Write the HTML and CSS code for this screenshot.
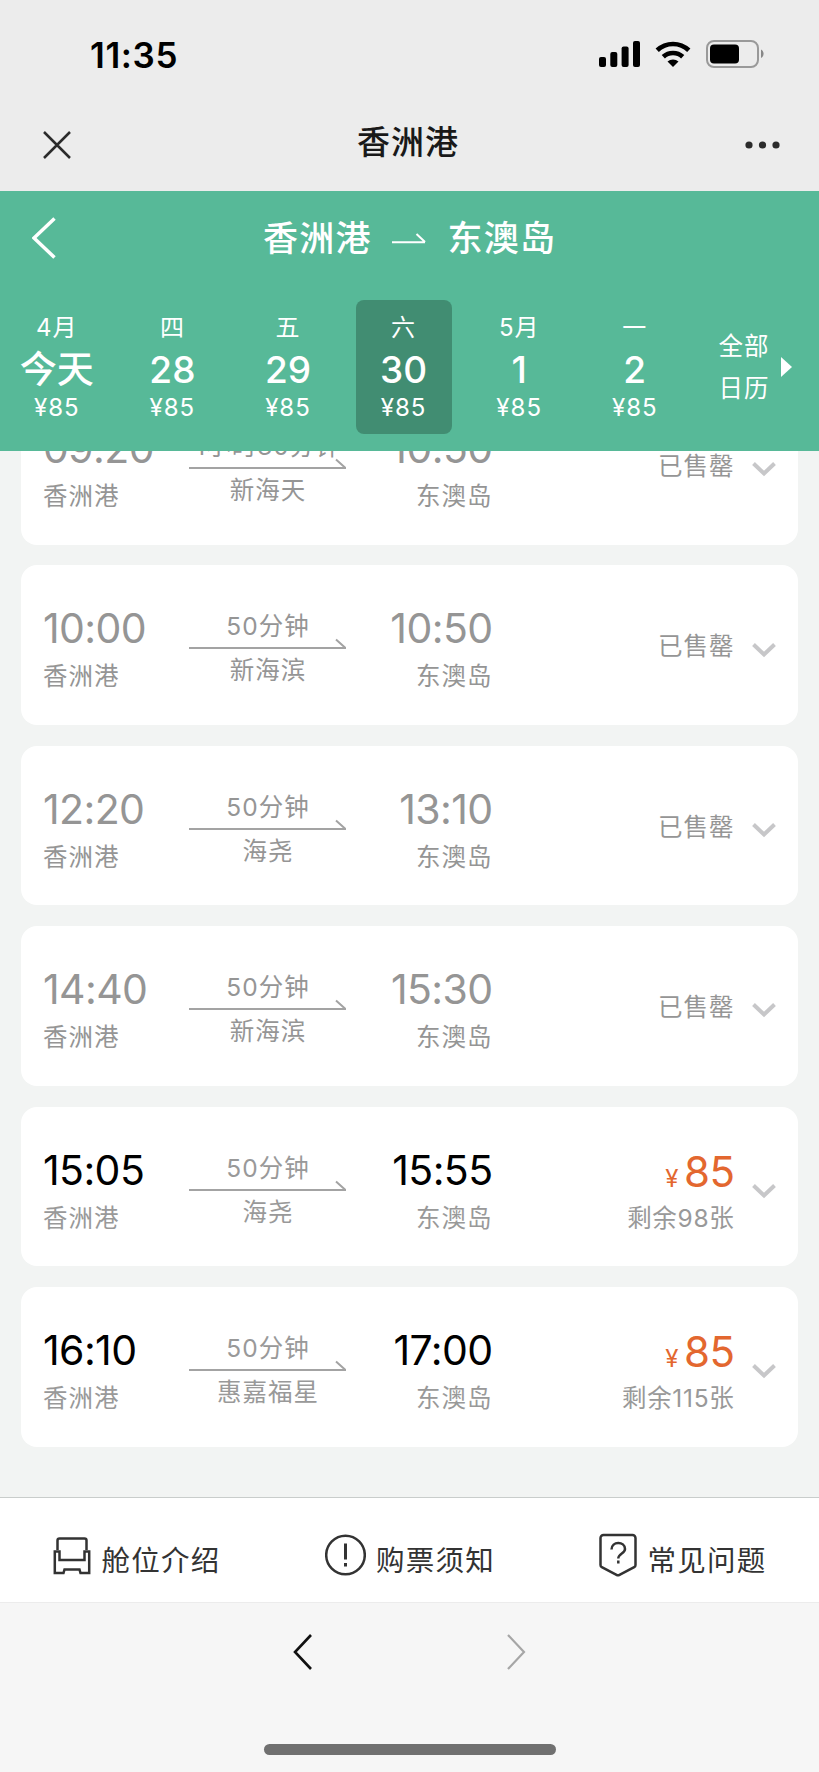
FILE: index.html
```
<!DOCTYPE html>
<html lang="zh-CN">
<head>
    <meta charset="UTF-8">
    <meta name="viewport" content="width=device-width, initial-scale=1.0">
    <title>香洲港</title>
    <link rel="stylesheet" href="styles.css">
</head>
<body>
    <svg class="symbols" aria-hidden="true">
        <symbol id="arrow" viewBox="0 0 158 12">
            <path d="M0 10h157M147 1.500l9.500 8.500" fill="none" stroke="currentColor" stroke-width="2"/>
        </symbol>
        <symbol id="down" viewBox="0 0 24 16">
            <path d="M1.500 2.500l10.500 10 10.500-10" fill="none" stroke="currentColor" stroke-width="4"/>
        </symbol>
    </svg>

    <div class="status-bar">
        <span class="clock">11:35</span>
        <div class="status-icons">
            <svg class="signal" width="41" height="26" viewBox="0 0 41 26">
                <rect x="0" y="16" width="7" height="10" rx="2"/>
                <rect x="11.300" y="11" width="7" height="15" rx="2"/>
                <rect x="22.600" y="5.500" width="7" height="20.500" rx="2"/>
                <rect x="34" y="0" width="7" height="26" rx="2"/>
            </svg>
            <svg class="wifi" width="36" height="26" viewBox="0 0 36 26">
                <path d="M2.200 9.300a23 23 0 0 1 31.600 0M8.300 15.800a14.300 14.300 0 0 1 19.400 0" fill="none" stroke="#000" stroke-width="4.700"/>
                <path d="M12.500 20.500a8.500 8.500 0 0 1 11 0L18 26z"/>
            </svg>
            <svg class="battery" width="59" height="28" viewBox="0 0 59 28">
                <rect x="1" y="1" width="51" height="26" rx="7" fill="none" stroke="#999" stroke-width="2"/>
                <rect x="4" y="4.500" width="29" height="19" rx="4"/>
                <path d="M55 9.500c3.400 1.500 3.400 7 0 8.500z" fill="#888"/>
            </svg>
        </div>
    </div>

    <div class="title-bar">
        <svg class="close" width="28" height="28" viewBox="0 0 28 28">
            <path d="M1 1l26 26M27 1L1 27" stroke="#2b2b2b" stroke-width="2.500"/>
        </svg>
        <h1>香洲港</h1>
        <svg class="more" width="35" height="8" viewBox="0 0 35 8">
            <circle cx="4" cy="4" r="3.600"/>
            <circle cx="17.500" cy="4" r="3.600"/>
            <circle cx="31" cy="4" r="3.600"/>
        </svg>
    </div>

    <header class="header">
        <div class="route">
            <svg class="back" width="24" height="42" viewBox="0 0 24 42">
                <path d="M22.500 1.500L2 21l20.500 19.500" fill="none" stroke="#fff" stroke-width="3.500"/>
            </svg>
            <span>香洲港</span>
            <svg class="route-arrow" width="34" height="12" viewBox="0 0 34 12">
                <path d="M0 10.200h33M24.500 2l8.500 8" fill="none" stroke="#fff" stroke-width="2"/>
            </svg>
            <span>东澳岛</span>
        </div>
        <div class="dates">
            <div class="date">
                <span class="week">4月</span>
                <span class="day today">今天</span>
                <span class="fare">¥85</span>
            </div>
            <div class="date">
                <span class="week">四</span>
                <span class="day">28</span>
                <span class="fare">¥85</span>
            </div>
            <div class="date">
                <span class="week">五</span>
                <span class="day">29</span>
                <span class="fare">¥85</span>
            </div>
            <div class="date active">
                <span class="week">六</span>
                <span class="day">30</span>
                <span class="fare">¥85</span>
            </div>
            <div class="date">
                <span class="week">5月</span>
                <span class="day">1</span>
                <span class="fare">¥85</span>
            </div>
            <div class="date">
                <span class="week">一</span>
                <span class="day">2</span>
                <span class="fare">¥85</span>
            </div>
            <div class="calendar">
                <span>全部<br>日历</span>
                <i class="triangle"></i>
            </div>
        </div>
    </header>

    <main class="trips">
        <div class="trip sold-out">
            <div class="depart">
                <div class="time">09:20</div>
                <div class="port">香洲港</div>
            </div>
            <div class="middle">
                <div class="duration">1小时30分钟</div>
                <svg class="line"><use href="#arrow"/></svg>
                <div class="ship">新海天</div>
            </div>
            <div class="arrive">
                <div class="time">10:50</div>
                <div class="port">东澳岛</div>
            </div>
            <div class="ticket">已售罄</div>
            <svg class="down"><use href="#down"/></svg>
        </div>

        <div class="trip sold-out">
            <div class="depart">
                <div class="time">10:00</div>
                <div class="port">香洲港</div>
            </div>
            <div class="middle">
                <div class="duration">50分钟</div>
                <svg class="line"><use href="#arrow"/></svg>
                <div class="ship">新海滨</div>
            </div>
            <div class="arrive">
                <div class="time">10:50</div>
                <div class="port">东澳岛</div>
            </div>
            <div class="ticket">已售罄</div>
            <svg class="down"><use href="#down"/></svg>
        </div>

        <div class="trip sold-out">
            <div class="depart">
                <div class="time">12:20</div>
                <div class="port">香洲港</div>
            </div>
            <div class="middle">
                <div class="duration">50分钟</div>
                <svg class="line"><use href="#arrow"/></svg>
                <div class="ship">海尧</div>
            </div>
            <div class="arrive">
                <div class="time">13:10</div>
                <div class="port">东澳岛</div>
            </div>
            <div class="ticket">已售罄</div>
            <svg class="down"><use href="#down"/></svg>
        </div>

        <div class="trip sold-out">
            <div class="depart">
                <div class="time">14:40</div>
                <div class="port">香洲港</div>
            </div>
            <div class="middle">
                <div class="duration">50分钟</div>
                <svg class="line"><use href="#arrow"/></svg>
                <div class="ship">新海滨</div>
            </div>
            <div class="arrive">
                <div class="time">15:30</div>
                <div class="port">东澳岛</div>
            </div>
            <div class="ticket">已售罄</div>
            <svg class="down"><use href="#down"/></svg>
        </div>

        <div class="trip">
            <div class="depart">
                <div class="time">15:05</div>
                <div class="port">香洲港</div>
            </div>
            <div class="middle">
                <div class="duration">50分钟</div>
                <svg class="line"><use href="#arrow"/></svg>
                <div class="ship">海尧</div>
            </div>
            <div class="arrive">
                <div class="time">15:55</div>
                <div class="port">东澳岛</div>
            </div>
            <div class="ticket">
                <div class="price"><small>¥</small>85</div>
                <div class="left">剩余98张</div>
            </div>
            <svg class="down"><use href="#down"/></svg>
        </div>

        <div class="trip">
            <div class="depart">
                <div class="time">16:10</div>
                <div class="port">香洲港</div>
            </div>
            <div class="middle">
                <div class="duration">50分钟</div>
                <svg class="line"><use href="#arrow"/></svg>
                <div class="ship">惠嘉福星</div>
            </div>
            <div class="arrive">
                <div class="time">17:00</div>
                <div class="port">东澳岛</div>
            </div>
            <div class="ticket">
                <div class="price"><small>¥</small>85</div>
                <div class="left">剩余115张</div>
            </div>
            <svg class="down"><use href="#down"/></svg>
        </div>
    </main>

    <div class="actions">
        <div class="action">
            <svg width="38" height="44" viewBox="0 0 38 44">
                <path d="M4.500 17V7.500a2 2 0 0 1 2-2h25a2 2 0 0 1 2 2V17M1.800 18.500h4.700V27h25v-8.500h4.700V40h-8.700l-1-3.500h-15l-1 3.500H1.800z"/>
            </svg>
            <span>舱位介绍</span>
        </div>
        <div class="action">
            <svg width="41" height="44" viewBox="0 0 41 44">
                <circle cx="20.500" cy="22" r="19.300"/>
                <path d="M20.500 10.500v16M20.500 30v3.500" stroke-width="3"/>
            </svg>
            <span>购票须知</span>
        </div>
        <div class="action">
            <svg width="38" height="44" viewBox="0 0 38 44">
                <path d="M4.500 2h29a3 3 0 0 1 3 3v27q0 1.500-1.300 2.200L20.500 41.800q-1.500.800-3 0L2.800 34.200Q1.500 33.500 1.500 32V5a3 3 0 0 1 3-3z"/>
                <path d="M12.500 16.500c0-8.700 13.500-8.700 13.500-.500 0 4.500-6.700 4.500-6.700 9.500M19.300 27.500v3"/>
            </svg>
            <span>常见问题</span>
        </div>
    </div>

    <div class="toolbar">
        <svg width="20" height="36" viewBox="0 0 20 36">
            <path d="M18 1L2 18l16 17" fill="none" stroke="#111" stroke-width="2.600"/>
        </svg>
        <svg width="20" height="36" viewBox="0 0 20 36">
            <path d="M2 1l16 17L2 35" fill="none" stroke="#a6a6a6" stroke-width="2.200"/>
        </svg>
    </div>
    <div class="home-bar"><i></i></div>
</body>
</html>
```
FILE: styles.css
```
* {
    box-sizing: border-box;
}
body {
    margin: 0;
    height: 1772px;
    overflow: hidden;
    display: flex;
    flex-direction: column;
    font-family: Inter, "Noto Sans CJK SC", sans-serif;
    font-size: 24px;
    background: #f2f4f3;
    color: #000;
}
svg {
    display: block;
    flex: none;
}
.symbols {
    display: none;
}

/* phone status bar */
.status-bar {
    height: 108px;
    padding: 0 54px 0 90px;
    display: flex;
    align-items: center;
    justify-content: space-between;
    background: #ececec;
}
.clock {
    font-size: 35px;
    font-weight: 600;
    line-height: 40px;
    letter-spacing: 0.600px;
    margin-top: 1px;
}
.status-icons {
    display: flex;
    align-items: center;
}
.wifi {
    margin: 0 15px;
}

.title-bar {
    height: 83px;
    padding: 0 39px 9px 43px;
    display: flex;
    align-items: center;
    justify-content: space-between;
    background: #ececec;
}
.title-bar h1 {
    margin: 0 0 6px;
    font-size: 33px;
    font-weight: 500;
    letter-spacing: 1px;
    line-height: 44px;
    color: #191919;
}
.more {
    fill: #2b2b2b;
}

/* green header */
.header {
    position: relative;
    z-index: 1;
    height: 260px;
    background: #57b998;
    color: #fff;
}
.route {
    height: 109px;
    padding: 0 0 16px 32px;
    display: flex;
    align-items: center;
    font-size: 35px;
    font-weight: 500;
    letter-spacing: 1.200px;
}
.route span {
    margin-top: -4px;
}
.back {
    margin-right: 207px;
}
.route-arrow {
    margin: 0 22px 0 20px;
}
.dates {
    display: flex;
    margin-left: -1px;
}
.date {
    width: 96px;
    height: 134px;
    margin: 0 9.800px;
    border-radius: 8px;
    display: flex;
    flex-direction: column;
    align-items: center;
    white-space: nowrap;
}
.date.active {
    background: #418d72;
}
.week {
    line-height: 32px;
    margin-top: 12px;
    letter-spacing: 1px;
}
.day {
    font-size: 37px;
    font-weight: 500;
    line-height: 46px;
    margin-top: 3px;
}
.fare {
    line-height: 30px;
    letter-spacing: 1px;
}
.calendar {
    display: flex;
    align-items: center;
    margin-left: 26px;
    line-height: 42px;
    letter-spacing: 1px;
    font-size: 24.500px;
}
.triangle {
    margin-left: 11px;
    border-left: 11px solid #fff;
    border-top: 10.500px solid transparent;
    border-bottom: 10.500px solid transparent;
}

/* sailings, scrolled under the header */
.trips {
    height: 1046px;
    padding: 0 21px 50.500px;
    display: flex;
    flex-direction: column;
    justify-content: flex-end;
    gap: 20.800px;
}
.trip {
    flex: none;
    height: 159.600px;
    padding: 0 22px;
    display: grid;
    grid-template-columns: 146px 158px 145.500px 1fr 43px;
    grid-template-rows: 100%;
    background: #fff;
    border-radius: 16px;
    color: #000;
}
.time {
    font-size: 41px;
    line-height: 50px;
    letter-spacing: -0.600px;
    margin-top: 38px;
}
.port,
.duration,
.ship,
.ticket {
    font-size: 24.500px;
    letter-spacing: 1px;
    color: #999;
}
.port {
    line-height: 36px;
    margin-top: 5px;
}
.middle {
    text-align: center;
}
.duration {
    line-height: 30px;
    margin-top: 46px;
}
.line {
    width: 158px;
    height: 12px;
    color: #a3a3a3;
    margin-bottom: 5px;
    margin-top: -3px;
}
.ship {
    line-height: 30px;
}
.arrive,
.ticket {
    text-align: right;
}
.ticket {
    line-height: 162px;
    margin-right: -1.500px;
}
.price {
    margin-top: 40px;
    font-size: 42px;
    line-height: 50px;
    letter-spacing: -0.500px;
    color: #e3672f;
}
.price small {
    font-size: 24px;
    line-height: 1;
    margin-right: 6px;
}
.left {
    line-height: 36px;
    margin-top: 3px;
    letter-spacing: 0.700px;
}
.down {
    width: 24px;
    height: 16px;
    align-self: center;
    justify-self: end;
    margin-top: 9px;
    color: #c7c7c9;
}
.sold-out .time,
.sold-out .port,
.sold-out .duration,
.sold-out .ship,
.sold-out .ticket {
    color: #959595;
}

.actions {
    height: 105px;
    display: grid;
    grid-template-columns: repeat(3, 1fr);
    background: #fff;
    border-top: 1px solid #c9cdcb;
}
.action {
    display: flex;
    align-items: center;
    justify-content: center;
    gap: 10px;
    padding: 9px 0 0 1px;
    font-size: 28.500px;
    letter-spacing: 1.300px;
    color: #333;
}
.action svg {
    fill: none;
    stroke: #333;
    stroke-width: 2.500;
}
.action span {
    margin-top: 7px;
}

.toolbar {
    height: 130px;
    padding-top: 31px;
    display: flex;
    justify-content: center;
    gap: 193px;
    background: #f6f6f6;
    border-top: 1px solid #ececec;
}
.home-bar {
    height: 40px;
    padding-top: 12px;
    background: #f6f6f6;
}
.home-bar i {
    display: block;
    width: 292px;
    height: 11px;
    margin: 0 auto;
    border-radius: 6px;
    background: #707070;
}
```
